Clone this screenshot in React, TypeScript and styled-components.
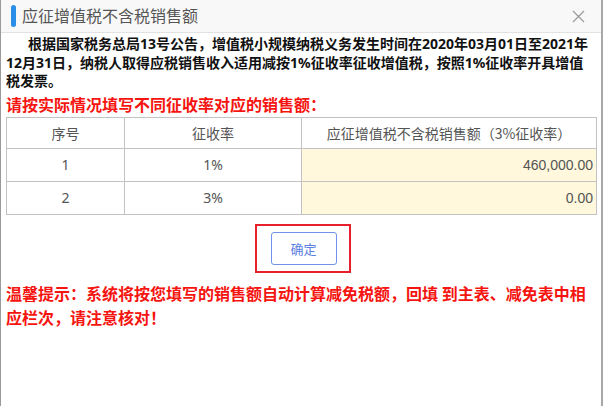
import React from "react";
import styled, { createGlobalStyle } from "styled-components";

const Global = createGlobalStyle`
  html, body { margin: 0; padding: 0; background: #a8a8a8; }
  body { font-family: "Noto Sans CJK SC", "Noto Sans", sans-serif; }
  * { box-sizing: border-box; }
`;

const Page = styled.div`
  width: 603px;
  height: 406px;
  display: flex;
  background: #a8a8a8;
`;

const Dialog = styled.div`
  width: 601px;
  height: 406px;
  background: #fff;
  border-left: 1px solid #9a9a9a;
  display: flex;
  flex-direction: column;
`;

const Header = styled.div`
  height: 33px;
  flex: none;
  background: #f8f8f8;
  border-bottom: 1px solid #e2e2e2;
  display: flex;
  align-items: center;
  padding: 0 14px 0 10px;
`;

const Bar = styled.span`
  width: 5px;
  height: 22px;
  border-radius: 3px;
  background: #2a8de8;
  margin-right: 6px;
`;

const Title = styled.div`
  flex: 1;
  font-size: 16px;
  color: #555;
  line-height: 33px;
  margin-top: -1px;
`;

const Close = styled.svg`
  width: 13px;
  height: 13px;
  margin-right: 2px;
`;

const Body = styled.div`
  flex: 1;
  padding: 2px 4px 0 5px;
  display: flex;
  flex-direction: column;
`;

const Notice = styled.p`
  margin: 0;
  font-family: "Noto Sans", "Noto Sans CJK SC", sans-serif;
  font-size: 14px;
  font-weight: bold;
  color: #111;
  line-height: 18.5px;
  text-indent: 22px;
  padding-right: 6px;
`;

const RedHeading = styled.div`
  margin-top: 2px;
  font-size: 16px;
  font-weight: bold;
  color: #f5140f;
  line-height: 22px;
`;

const Table = styled.table`
  margin-top: 2px;
  width: 590px;
  border-collapse: collapse;
  table-layout: fixed;
  font-size: 14px;
  color: #555;
`;

const Th = styled.th<{ $w: number }>`
  width: ${(p) => p.$w}px;
  height: 31px;
  border: 1px solid #c2c2c2;
  font-weight: normal;
  text-align: center;
  padding: 0;
`;

const Td = styled.td<{ $amount?: boolean }>`
  height: 33px;
  border: 1px solid #c2c2c2;
  padding: 0 ${(p) => (p.$amount ? "3px" : "0")};
  text-align: ${(p) => (p.$amount ? "right" : "center")};
  background: ${(p) => (p.$amount ? "#fff8dc" : "#fff")};
  font-family: ${(p) =>
    p.$amount ? '"Liberation Sans", sans-serif' : '"Noto Sans", "Noto Sans CJK SC", sans-serif'};
`;

const ButtonRow = styled.div`
  display: flex;
  justify-content: center;
  margin-top: 9px;
  padding-left: 2px;
`;

const Highlight = styled.div`
  width: 96px;
  height: 49px;
  border: 2px solid #e8202a;
  display: flex;
  align-items: center;
  justify-content: center;
`;

const Confirm = styled.button`
  width: 66px;
  height: 33px;
  margin-left: 2px;
  border: 1px solid #6f92ea;
  border-radius: 3px;
  background: #fff;
  color: #5a7ee2;
  font-size: 13px;
  font-family: "Noto Sans CJK SC", sans-serif;
  padding: 0;
`;

const Tip = styled.div`
  margin-top: 8px;
  font-size: 16px;
  font-weight: bold;
  color: #f5140f;
  line-height: 24px;
  padding-right: 8px;
`;

const rows = [
  { no: 1, rate: "1%", amount: "460,000.00" },
  { no: 2, rate: "3%", amount: "0.00" },
];

export default function App() {
  return (
    <Page>
      <Global />
      <Dialog>
        <Header>
          <Bar />
          <Title>应征增值税不含税销售额</Title>
          <Close viewBox="0 0 13 13">
            <path d="M1 1 L12 12 M12 1 L1 12" stroke="#9a9a9a" strokeWidth="1.2" fill="none" />
          </Close>
        </Header>
        <Body>
          <Notice>
            根据国家税务总局13号公告，增值税小规模纳税义务发生时间在2020年03月01日至2021年12月31日，纳税人取得应税销售收入适用减按1%征收率征收增值税，按照1%征收率开具增值税发票。
          </Notice>
          <RedHeading>请按实际情况填写不同征收率对应的销售额：</RedHeading>
          <Table>
            <thead>
              <tr>
                <Th $w={118}>序号</Th>
                <Th $w={177}>征收率</Th>
                <Th $w={295}>应征增值税不含税销售额（3%征收率）</Th>
              </tr>
            </thead>
            <tbody>
              {rows.map((r) => (
                <tr key={r.no}>
                  <Td>{r.no}</Td>
                  <Td>{r.rate}</Td>
                  <Td $amount>{r.amount}</Td>
                </tr>
              ))}
            </tbody>
          </Table>
          <ButtonRow>
            <Highlight>
              <Confirm>确定</Confirm>
            </Highlight>
          </ButtonRow>
          <Tip>
            温馨提示：系统将按您填写的销售额自动计算减免税额，回填 到主表、减免表中相应栏次，请注意核对！
          </Tip>
        </Body>
      </Dialog>
    </Page>
  );
}
